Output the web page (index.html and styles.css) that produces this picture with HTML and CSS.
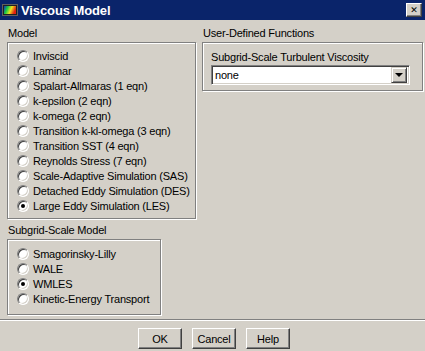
FILE: index.html
```html
<!DOCTYPE html>
<html lang="en">
<head>
    <meta charset="UTF-8">
    <title>Viscous Model</title>
    <link rel="stylesheet" href="styles.css">
</head>
<body>
    <div class="window">
        <div class="titlebar">
            <svg class="app-icon" width="16" height="14" viewBox="0 0 16 14">
                <defs>
                    <linearGradient id="g" x1="0" y1="0" x2="1" y2="0.3">
                        <stop offset="0" stop-color="#1030c0"/>
                        <stop offset="0.35" stop-color="#20d040"/>
                        <stop offset="0.65" stop-color="#f0e020"/>
                        <stop offset="1" stop-color="#e02010"/>
                    </linearGradient>
                </defs>
                <rect x="0.5" y="1.5" width="15" height="11" fill="#202020" stroke="#606060"/>
                <rect x="2" y="3" width="12" height="8" fill="url(#g)"/>
            </svg>
            <span class="title">Viscous Model</span>
            <button class="close-btn">&#x2715;</button>
        </div>

        <div class="columns">
            <div class="left">
                <div class="group-label">Model</div>
                <div class="group model-box">
                    <div class="radio-row"><span class="radio"></span>Inviscid</div>
                    <div class="radio-row"><span class="radio"></span>Laminar</div>
                    <div class="radio-row"><span class="radio"></span>Spalart-Allmaras (1 eqn)</div>
                    <div class="radio-row"><span class="radio"></span>k-epsilon (2 eqn)</div>
                    <div class="radio-row"><span class="radio"></span>k-omega (2 eqn)</div>
                    <div class="radio-row"><span class="radio"></span>Transition k-kl-omega (3 eqn)</div>
                    <div class="radio-row"><span class="radio"></span>Transition SST (4 eqn)</div>
                    <div class="radio-row"><span class="radio"></span>Reynolds Stress (7 eqn)</div>
                    <div class="radio-row"><span class="radio"></span>Scale-Adaptive Simulation (SAS)</div>
                    <div class="radio-row"><span class="radio"></span>Detached Eddy Simulation (DES)</div>
                    <div class="radio-row"><span class="radio checked"></span>Large Eddy Simulation (LES)</div>
                </div>

                <div class="group-label second">Subgrid-Scale Model</div>
                <div class="group sgs-box">
                    <div class="radio-row"><span class="radio"></span>Smagorinsky-Lilly</div>
                    <div class="radio-row"><span class="radio"></span>WALE</div>
                    <div class="radio-row"><span class="radio checked"></span>WMLES</div>
                    <div class="radio-row"><span class="radio"></span>Kinetic-Energy Transport</div>
                </div>
            </div>

            <div class="right">
                <div class="group-label">User-Defined Functions</div>
                <div class="group udf-box">
                    <div class="field-label">Subgrid-Scale Turbulent Viscosity</div>
                    <div class="select">
                        <span class="select-value">none</span>
                        <span class="select-arrow"></span>
                    </div>
                </div>
            </div>
        </div>

        <div class="separator"></div>

        <div class="buttons">
            <button class="btn">OK</button>
            <button class="btn">Cancel</button>
            <button class="btn">Help</button>
        </div>
    </div>
</body>
</html>
```

FILE: styles.css
```css
body {
    margin: 0;
    background: #d4d0c8;
    font-family: "Liberation Sans", Arial, sans-serif;
    font-size: 11px;
    letter-spacing: -0.2px;
    color: #000;
}
.window {
    width: 425px;
    height: 351px;
    background: #d4d0c8;
    overflow: hidden;
}
.titlebar {
    height: 20px;
    background: #0a246a;
    display: flex;
    align-items: center;
    padding: 0 3px 0 2px;
    box-sizing: border-box;
}
.app-icon {
    margin-right: 3px;
}
.title {
    color: #fff;
    font-weight: bold;
    font-size: 13px;
    letter-spacing: -0.1px;
    flex: 1;
}
.close-btn {
    width: 16px;
    height: 14px;
    padding: 0;
    background: #d4d0c8;
    border: 1px solid;
    border-color: #fff #404040 #404040 #fff;
    box-shadow: inset -1px -1px 0 #808080;
    font-family: "DejaVu Sans", sans-serif;
    font-size: 9px;
    font-weight: bold;
    line-height: 11px;
    color: #000;
}
.columns {
    display: flex;
    gap: 6px;
    padding: 7px 0 0 7px;
    align-items: flex-start;
}
.left {
    width: 189px;
}
.right {
    width: 221px;
}
.group-label {
    height: 13px;
    line-height: 13px;
    margin-bottom: 2px;
    padding-left: 1px;
}
.group-label.second {
    margin-top: 5px;
}
.group {
    border: 1px solid #808080;
    box-shadow: inset 1px 1px 0 #fff, 1px 1px 0 #fff;
}
.model-box {
    padding: 5px 0 5px 9px;
}
.sgs-box {
    width: 154px;
    padding: 6px 0 7px 9px;
    box-sizing: border-box;
    height: 76px;
}
.radio-row {
    height: 15px;
    display: flex;
    align-items: center;
    white-space: nowrap;
}
.radio {
    width: 12px;
    height: 12px;
    box-sizing: border-box;
    border-radius: 50%;
    background: #fff;
    border: 1px solid;
    border-color: #808080 #fff #fff #808080;
    box-shadow: inset 1px 1px 0 #404040, inset -1px -1px 0 #d4d0c8;
    margin-right: 4px;
    position: relative;
}
.radio.checked::after {
    content: "";
    position: absolute;
    left: 3px;
    top: 3px;
    width: 4px;
    height: 4px;
    border-radius: 50%;
    background: #000;
}
.udf-box {
    padding: 8px 0 5px 8px;
}
.field-label {
    height: 13px;
    line-height: 13px;
}
.select {
    margin-top: 1px;
    width: 199px;
    height: 20px;
    box-sizing: border-box;
    background: #fff;
    border: 1px solid;
    border-color: #808080 #fff #fff #808080;
    box-shadow: inset 1px 1px 0 #404040, inset -1px -1px 0 #d4d0c8;
    display: flex;
    align-items: center;
    padding: 2px 2px 2px 3px;
}
.select-value {
    flex: 1;
}
.select-arrow {
    width: 16px;
    height: 16px;
    box-sizing: border-box;
    background: #d4d0c8;
    border: 1px solid;
    border-color: #d4d0c8 #404040 #404040 #d4d0c8;
    box-shadow: inset 1px 1px 0 #fff, inset -1px -1px 0 #808080;
    position: relative;
}
.select-arrow::after {
    content: "";
    position: absolute;
    left: 3px;
    top: 5px;
    border-left: 4px solid transparent;
    border-right: 4px solid transparent;
    border-top: 4px solid #000;
}
.separator {
    margin-top: 4px;
    height: 1px;
    background: #808080;
    border-bottom: 1px solid #fff;
}
.buttons {
    display: flex;
    justify-content: center;
    gap: 10px;
    margin-top: 7px;
    padding-left: 3px;
}
.btn {
    width: 44px;
    height: 21px;
    padding: 0;
    background: #d4d0c8;
    border: 1px solid;
    border-color: #fff #404040 #404040 #fff;
    box-shadow: inset -1px -1px 0 #808080;
    font-family: "Liberation Sans", Arial, sans-serif;
    font-size: 11px;
    letter-spacing: -0.2px;
    color: #000;
}
```
